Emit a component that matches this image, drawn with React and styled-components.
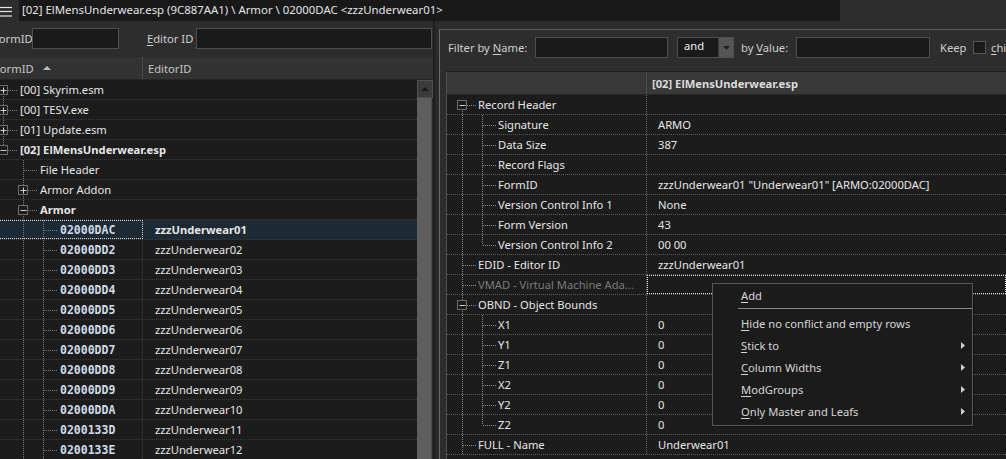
import React from 'react';
import styled, { createGlobalStyle } from 'styled-components';

const UI = '"Segoe UI", "Noto Sans", "Open Sans", sans-serif';

const GlobalStyle = createGlobalStyle`
  html, body { margin: 0; padding: 0; background: #2d2d2d; overflow: hidden; }
  body { font-family: ${UI}; font-size: 11.2px; color: #e0e0e0; }
  #root { width: 1006px; height: 459px; }
  u { text-decoration-thickness: 1px; text-underline-offset: 2px; }
`;

const Root = styled.div`
  position: relative;
  width: 1006px;
  height: 459px;
  overflow: hidden;
  display: flex;
  flex-direction: column;
  background: #2d2d2d;
`;

const TopBar = styled.div`
  display: flex;
  height: 21px;
  flex: none;
`;

const MenuButton = styled.div`
  width: 19px;
  flex: none;
  padding-top: 5px;
  box-sizing: border-box;
`;

const TitleBox = styled.div`
  width: 821px;
  flex: none;
  background: #181818;
  color: #e4e4e4;
  padding-left: 3px;
  box-sizing: border-box;
  line-height: 20px;
  font-size: 11.4px;
  white-space: nowrap;
  overflow: hidden;
`;

const Main = styled.div`
  flex: 1;
  display: flex;
  min-height: 0;
`;

const LeftPanel = styled.div`
  width: 433px;
  flex: none;
  overflow: hidden;
`;

const LeftInner = styled.div`
  margin-left: -7px;
  width: 440px;
  height: 100%;
  display: flex;
  flex-direction: column;
`;

const FilterRow = styled.div`
  display: flex;
  align-items: flex-start;
  height: ${p => p.$h}px;
  padding-top: 7px;
  padding-left: ${p => p.$pl || 0}px;
  box-sizing: border-box;
  flex: none;
  white-space: nowrap;
  border-bottom: ${p => (p.$line ? '1px solid #1f1f1f' : 'none')};
`;

const FLabel = styled.span`
  width: ${p => (p.$w ? `${p.$w}px` : 'auto')};
  margin-left: ${p => p.$ml || 0}px;
  flex: none;
  line-height: 21px;
  color: #cfcfcf;
`;

const Input = styled.div`
  width: ${p => (p.$w ? `${p.$w}px` : 'auto')};
  flex: ${p => (p.$w ? 'none' : '1')};
  margin-left: ${p => p.$ml || 0}px;
  margin-right: ${p => p.$mr || 0}px;
  height: 21px;
  box-sizing: border-box;
  background: #1a1a1a;
  border: 1px solid #4e4e4e;
`;

const Combo = styled.div`
  display: flex;
  width: 57px;
  height: 21px;
  margin-left: ${p => p.$ml}px;
  box-sizing: border-box;
  background: #1a1a1a;
  border: 1px solid #4e4e4e;
  flex: none;
`;

const ComboText = styled.span`
  flex: 1;
  padding-left: 6px;
  line-height: 15px;
  color: #f0f0f0;
`;

const ComboBtn = styled.div`
  width: 14px;
  background: #555;
  border-left: 1px solid #3a3a3a;
  display: flex;
  align-items: center;
  justify-content: center;
`;

const Check = styled.div`
  width: 13px;
  height: 13px;
  margin: 4px 5px 0 ${p => p.$ml}px;
  box-sizing: border-box;
  background: #1a1a1a;
  border: 1px solid #555;
  flex: none;
`;

const HeaderRow = styled.div`
  display: flex;
  height: 23px;
  flex: none;
  box-sizing: border-box;
  background: ${p => p.$bg};
  border-bottom: 1px solid #262626;
`;

const HeaderCell = styled.div`
  width: ${p => (p.$w ? `${p.$w}px` : 'auto')};
  flex: ${p => (p.$w ? 'none' : '1')};
  display: flex;
  align-items: center;
  gap: 9px;
  padding-left: ${p => p.$pl}px;
  box-sizing: border-box;
  border-right: ${p => (p.$sep ? '1px solid #4a4a4a' : 'none')};
  color: ${p => (p.$bold ? '#dcdcdc' : '#c6c6c6')};
  font-weight: ${p => (p.$bold ? 700 : 400)};
  white-space: nowrap;
`;

const Body = styled.div`
  flex: 1;
  display: flex;
  min-height: 0;
`;

const TreeArea = styled.div`
  flex: 1;
  background: #1c1c1c;
  overflow: hidden;
`;

const TreeRow = styled.div`
  display: flex;
  height: 20px;
  box-sizing: border-box;
  border-bottom: 1px dotted ${p => p.$sep};
  background: ${p => (p.$selected ? '#1e2a33' : 'transparent')};
`;

const NameCell = styled.div`
  width: ${p => (p.$span ? 'auto' : `${p.$w}px`)};
  flex: ${p => (p.$span ? '1' : 'none')};
  display: flex;
  align-items: center;
  box-sizing: border-box;
  padding-left: ${p => p.$pl}px;
  border-right: ${p => (p.$span ? 'none' : `1px dotted ${p.$sep}`)};
  outline: ${p => (p.$focus ? '1px dotted #d8d8d8' : 'none')};
  outline-offset: -1px;
  white-space: nowrap;
  overflow: hidden;
`;

const ValueCell = styled.div`
  flex: 1;
  display: flex;
  align-items: center;
  padding-left: ${p => p.$pl}px;
  white-space: nowrap;
  overflow: hidden;
  outline: ${p => (p.$focus ? '1px dotted #e0e0e0' : 'none')};
  outline-offset: -1px;
  color: #e6e6e6;
  font-weight: ${p => (p.$bold ? 700 : 400)};
`;

const NodeText = styled.span`
  font-weight: ${p => (p.$bold ? 700 : 400)};
  color: ${p => (p.$dim ? '#7a7a7a' : '#e6e6e6')};
`;

const Mono = styled.span`
  font-family: "DejaVu Sans Mono", "Liberation Mono", monospace;
  font-size: 11.5px;
  font-weight: 700;
  color: #cfdbe7;
`;

const GuideSvg = styled.svg`
  flex: none;
  display: block;
  overflow: visible;
  align-self: flex-start;
  line.dot { stroke: ${p => p.$c}; stroke-width: 1; stroke-dasharray: 1 1; }
  rect { fill: #1c1c1c; stroke: #6c6c6c; }
  line.sign { stroke: #cfcfcf; }
`;

const ScrollBar = styled.div`
  width: 16px;
  flex: none;
  display: flex;
  flex-direction: column;
  background: #2b2b2b;
`;

const ScrollBtn = styled.div`
  height: 18px;
  box-sizing: border-box;
  background: #3b3b3b;
  border: 1px solid #505050;
  display: flex;
  align-items: center;
  justify-content: center;
`;

const ScrollThumb = styled.div`
  flex: 1;
  margin-right: 1px;
  background: #5e5e5e;
  border-right: 1px solid #4d4d4d;
`;

const Splitter = styled.div`
  width: 6px;
  flex: none;
  background: #2a2a2a;
  border-left: 2px solid #1f1f1f;
  box-sizing: border-box;
`;

const RightPanel = styled.div`
  flex: 1;
  margin-top: 8px;
  border-top: 1px solid #5a5a5a;
  border-left: 1px solid #6a6a6a;
  padding-left: 6px;
  display: flex;
  flex-direction: column;
  overflow: hidden;
  min-width: 0;
`;

const Grid = styled.div`
  flex: 1;
  display: flex;
  flex-direction: column;
  border-left: 1px solid #505050;
  background: #1c1c1c;
  min-height: 0;
`;

const Menu = styled.div`
  position: absolute;
  left: 712px;
  top: 283px;
  width: 261px;
  box-sizing: border-box;
  background: #1b1b1b;
  border: 1px solid #575757;
  padding-bottom: 3px;
  box-shadow: 1px 1px 2px rgba(0, 0, 0, 0.4);
`;

const MenuItem = styled.div`
  height: 22px;
  display: flex;
  align-items: center;
  padding-left: 28px;
  padding-right: 7px;
  color: #d6d6d6;
`;

const MenuLabel = styled.span`
  flex: 1;
`;

const MenuSep = styled.div`
  height: 1px;
  margin: 2px 0 3px 25px;
  background: #8a8a8a;
`;

function Guide({ w = 20, v = 'none', box, connector, color }) {
  return (
    <GuideSvg width={w} height={20} viewBox={`0 0 ${w} 20`} $c={color}>
      {v === 'full' && <line className="dot" x1="10.5" y1="0" x2="10.5" y2="20" />}
      {v === 'top' && <line className="dot" x1="10.5" y1="0" x2="10.5" y2="10" />}
      {v === 'bottom' && <line className="dot" x1="10.5" y1="10" x2="10.5" y2="20" />}
      {connector && <line className="dot" x1={box ? 15 : 11} y1="10.5" x2={w - 2} y2="10.5" />}
      {box && <rect x="5.5" y="5.5" width="9" height="9" />}
      {box && <line className="sign" x1="7.5" y1="10.5" x2="13.5" y2="10.5" />}
      {box === 'plus' && <line className="sign" x1="10.5" y1="7.5" x2="10.5" y2="13.5" />}
    </GuideSvg>
  );
}

function Guides({ anc, v, box, ownW, color }) {
  return (
    <>
      {anc.map((on, i) => (
        <Guide key={i} v={on ? 'full' : 'none'} color={color} />
      ))}
      <Guide w={ownW} v={v} box={box} connector color={color} />
    </>
  );
}

function Hamburger() {
  return (
    <svg width="13" height="11" viewBox="0 0 13 11">
      <g stroke="#e6e6e6" strokeWidth="1.2">
        <line x1="0" y1="1.5" x2="12" y2="1.5" />
        <line x1="0" y1="5.5" x2="12" y2="5.5" />
        <line x1="0" y1="10" x2="12" y2="10" />
      </g>
    </svg>
  );
}

function Tri({ dir = 'up', color = '#1e1e1e', w = 8, h = 4 }) {
  const pts =
    dir === 'up'
      ? `0,${h} ${w / 2},0 ${w},${h}`
      : dir === 'down'
      ? `0,0 ${w / 2},${h} ${w},0`
      : `0,0 ${w},${h / 2} 0,${h}`;
  return (
    <svg width={w} height={h} viewBox={`0 0 ${w} ${h}`} style={{ display: 'block' }}>
      <polygon points={pts} fill={color} />
    </svg>
  );
}

const records = [
  ['02000DAC', 'zzzUnderwear01'],
  ['02000DD2', 'zzzUnderwear02'],
  ['02000DD3', 'zzzUnderwear03'],
  ['02000DD4', 'zzzUnderwear04'],
  ['02000DD5', 'zzzUnderwear05'],
  ['02000DD6', 'zzzUnderwear06'],
  ['02000DD7', 'zzzUnderwear07'],
  ['02000DD8', 'zzzUnderwear08'],
  ['02000DD9', 'zzzUnderwear09'],
  ['02000DDA', 'zzzUnderwear10'],
  ['0200133D', 'zzzUnderwear11'],
  ['0200133E', 'zzzUnderwear12'],
];

const leftRows = [
  { anc: [], v: 'bottom', box: 'plus', text: '[00] Skyrim.esm' },
  { anc: [], v: 'full', box: 'plus', text: '[00] TESV.exe' },
  { anc: [], v: 'full', box: 'plus', text: '[01] Update.esm' },
  { anc: [], v: 'top', box: 'minus', text: '[02] ElMensUnderwear.esp', bold: true },
  { anc: [false], v: 'full', text: 'File Header' },
  { anc: [false], v: 'full', box: 'plus', text: 'Armor Addon' },
  { anc: [false], v: 'full', box: 'minus', text: 'Armor', bold: true },
  ...records.map(([id, edid], i) => ({
    anc: [false, true],
    v: 'full',
    id,
    edid,
    selected: i === 0,
  })),
];

const rightRows = [
  { anc: [], v: 'bottom', box: 'minus', text: 'Record Header', val: '' },
  { anc: [true], v: 'full', text: 'Signature', val: 'ARMO' },
  { anc: [true], v: 'full', text: 'Data Size', val: '387' },
  { anc: [true], v: 'full', text: 'Record Flags', val: '' },
  { anc: [true], v: 'full', text: 'FormID', val: 'zzzUnderwear01 "Underwear01" [ARMO:02000DAC]' },
  { anc: [true], v: 'full', text: 'Version Control Info 1', val: 'None' },
  { anc: [true], v: 'full', text: 'Form Version', val: '43' },
  { anc: [true], v: 'top', text: 'Version Control Info 2', val: '00 00' },
  { anc: [], v: 'full', text: 'EDID - Editor ID', val: 'zzzUnderwear01' },
  { anc: [], v: 'full', text: 'VMAD - Virtual Machine Ada...', val: '', dim: true, focus: true },
  { anc: [], v: 'full', box: 'minus', text: 'OBND - Object Bounds', val: '' },
  { anc: [true], v: 'full', text: 'X1', val: '0' },
  { anc: [true], v: 'full', text: 'Y1', val: '0' },
  { anc: [true], v: 'full', text: 'Z1', val: '0' },
  { anc: [true], v: 'full', text: 'X2', val: '0' },
  { anc: [true], v: 'full', text: 'Y2', val: '0' },
  { anc: [true], v: 'top', text: 'Z2', val: '0' },
  { anc: [], v: 'full', text: 'FULL - Name', val: 'Underwear01' },
];

const menuItems = [
  { key: 'H', rest: 'ide no conflict and empty rows' },
  { key: 'S', rest: 'tick to', sub: true },
  { key: 'C', rest: 'olumn Widths', sub: true },
  { key: 'M', rest: 'odGroups', sub: true },
  { key: 'O', rest: 'nly Master and Leafs', sub: true },
];

export default function App() {
  return (
    <Root>
      <GlobalStyle />
      <TopBar>
        <MenuButton>
          <Hamburger />
        </MenuButton>
        <TitleBox>[02] ElMensUnderwear.esp (9C887AA1) \ Armor \ 02000DAC &lt;zzzUnderwear01&gt;</TitleBox>
      </TopBar>
      <Main>
        <LeftPanel>
          <LeftInner>
            <FilterRow $h={36}>
              <FLabel $w={39}>
                <u>F</u>ormID
              </FLabel>
              <Input $w={87} />
              <FLabel $w={49} $ml={28}>
                <u>E</u>ditor ID
              </FLabel>
              <Input $mr={1} />
            </FilterRow>
            <HeaderRow $bg="#323232">
              <HeaderCell $w={150} $pl={1} $sep>
                FormID
                <Tri dir="up" color="#bdbdbd" w={8} h={4} />
              </HeaderCell>
              <HeaderCell $pl={5}>EditorID</HeaderCell>
            </HeaderRow>
            <Body>
              <TreeArea>
                {leftRows.map((r, i) => (
                  <TreeRow key={i} $sep="#3a3a3a" $selected={r.selected}>
                    <NameCell $w={150} $pl={0} $sep="#383838" $focus={r.selected} $span={!r.id}>
                      <Guides anc={r.anc} v={r.v} box={r.box} ownW={27} color="#7a7a7a" />
                      {r.id ? <Mono>{r.id}</Mono> : <NodeText $bold={r.bold}>{r.text}</NodeText>}
                    </NameCell>
                    {r.edid && (
                      <ValueCell $pl={12} $bold={r.selected}>
                        {r.edid}
                      </ValueCell>
                    )}
                  </TreeRow>
                ))}
              </TreeArea>
              <ScrollBar>
                <ScrollBtn>
                  <Tri dir="up" color="#1a1a1a" w={8} h={4} />
                </ScrollBtn>
                <ScrollThumb />
              </ScrollBar>
            </Body>
          </LeftInner>
        </LeftPanel>
        <Splitter />
        <RightPanel>
          <FilterRow $h={42} $pl={2} $line>
            <FLabel $w={87}>
              Filter by <u>N</u>ame:
            </FLabel>
            <Input $w={133} />
            <Combo $ml={9}>
              <ComboText>and</ComboText>
              <ComboBtn>
                <Tri dir="down" color="#222" w={7} h={4} />
              </ComboBtn>
            </Combo>
            <FLabel $w={55} $ml={7}>
              by <u>V</u>alue:
            </FLabel>
            <Input $w={134} />
            <FLabel $w={33} $ml={10}>
              Keep
            </FLabel>
            <Check $ml={0} />
            <FLabel>
              <u>c</u>hildren
            </FLabel>
          </FilterRow>
          <Grid>
            <HeaderRow $bg="#383838">
              <HeaderCell $w={200} $pl={0} $sep />
              <HeaderCell $pl={5} $bold>
                [02] ElMensUnderwear.esp
              </HeaderCell>
            </HeaderRow>
            {rightRows.map((r, i) => (
              <TreeRow key={i} $sep="#5a5a5a">
                <NameCell $w={200} $pl={5} $sep="#6a6a6a">
                  <Guides anc={r.anc} v={r.v} box={r.box} ownW={26} color="#8a8a8a" />
                  <NodeText $dim={r.dim}>{r.text}</NodeText>
                </NameCell>
                <ValueCell $pl={11} $focus={r.focus}>
                  {r.val}
                </ValueCell>
              </TreeRow>
            ))}
          </Grid>
        </RightPanel>
      </Main>
      <Menu>
        <MenuItem>
          <MenuLabel>
            <u>A</u>dd
          </MenuLabel>
        </MenuItem>
        <MenuSep />
        {menuItems.map(m => (
          <MenuItem key={m.key}>
            <MenuLabel>
              <u>{m.key}</u>
              {m.rest}
            </MenuLabel>
            {m.sub && <Tri dir="right" color="#cfcfcf" w={4} h={7} />}
          </MenuItem>
        ))}
      </Menu>
    </Root>
  );
}
